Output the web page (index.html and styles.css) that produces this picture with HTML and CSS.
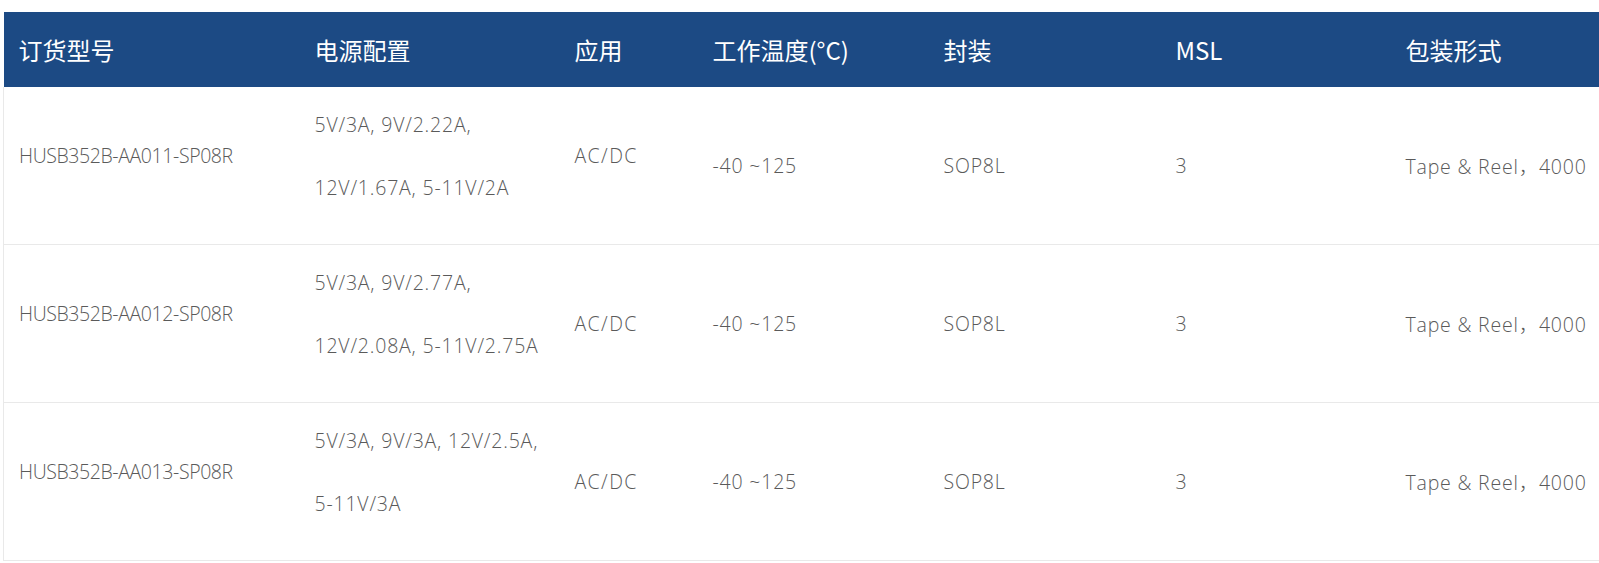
FILE: index.html
```html
<!DOCTYPE html>
<html lang="zh-CN">
<head>
<meta charset="utf-8">
<title>订货信息</title>
<link rel="stylesheet" href="styles.css">
</head>
<body>
<div class="page">
  <div class="table-wrap">
    <table class="spec">
      <colgroup>
        <col class="c1"><col class="c2"><col class="c3"><col class="c4"><col class="c5"><col class="c6"><col class="c7">
      </colgroup>
      <thead>
        <tr>
          <th>订货型号</th>
          <th>电源配置</th>
          <th>应用</th>
          <th>工作温度(°C)</th>
          <th>封装</th>
          <th>MSL</th>
          <th>包装形式</th>
        </tr>
      </thead>
      <tbody>
        <tr>
          <td class="model"><p class="ln">HUSB352B-AA011-SP08R</p></td>
          <td><p class="ln">5V/3A, 9V/2.22A,</p><p class="ln">12V/1.67A, 5-11V/2A</p></td>
          <td class="app"><p class="ln">AC/DC</p></td>
          <td>-40 ~125</td>
          <td>SOP8L</td>
          <td>3</td>
          <td>Tape &amp; Reel，4000</td>
        </tr>
        <tr>
          <td class="model"><p class="ln">HUSB352B-AA012-SP08R</p></td>
          <td><p class="ln">5V/3A, 9V/2.77A,</p><p class="ln">12V/2.08A, 5-11V/2.75A</p></td>
          <td class="app">AC/DC</td>
          <td>-40 ~125</td>
          <td>SOP8L</td>
          <td>3</td>
          <td>Tape &amp; Reel，4000</td>
        </tr>
        <tr>
          <td class="model"><p class="ln">HUSB352B-AA013-SP08R</p></td>
          <td><p class="ln">5V/3A, 9V/3A, 12V/2.5A,</p><p class="ln">5-11V/3A</p></td>
          <td class="app">AC/DC</td>
          <td>-40 ~125</td>
          <td>SOP8L</td>
          <td>3</td>
          <td>Tape &amp; Reel，4000</td>
        </tr>
      </tbody>
    </table>
  </div>
</div>
</body>
</html>
```

FILE: styles.css
```css
html, body {
  margin: 0;
  padding: 0;
  background: #ffffff;
  overflow: hidden;
}

.page {
  padding: 12px 0 0 3px;
}

.table-wrap {
  width: 100%;
  overflow: hidden;
}

.spec {
  border-collapse: collapse;
  table-layout: fixed;
  width: 1640px;
  font-family: "Open Sans", "Noto Sans CJK SC", sans-serif;
}

.c1 { width: 296px; }
.c2 { width: 260px; }
.c3 { width: 138px; }
.c4 { width: 231px; }
.c5 { width: 232px; }
.c6 { width: 230px; }
.c7 { width: 253px; }

.spec th {
  background: #1c4a84;
  color: #ffffff;
  font-family: "Noto Sans CJK SC", "Open Sans", sans-serif;
  font-size: 24px;
  font-weight: 400;
  text-align: left;
  height: 75px;
  padding: 0 0 0 15px;
  vertical-align: middle;
  white-space: nowrap;
}

.spec td {
  height: 157px;
  padding: 0 0 0 15px;
  color: #5a5a5a;
  font-size: 19.5px;
  font-weight: 300;
  letter-spacing: 0.8px;
  vertical-align: middle;
  border-bottom: 1px solid #e9e9e9;
  white-space: nowrap;
}

.spec td.model {
  letter-spacing: -0.4px;
}

.spec td.app {
  letter-spacing: 1.4px;
}

.spec td:first-child {
  border-left: 1px solid #e9e9e9;
}

.ln {
  margin: 0 0 20px;
  line-height: 43px;
}
```
